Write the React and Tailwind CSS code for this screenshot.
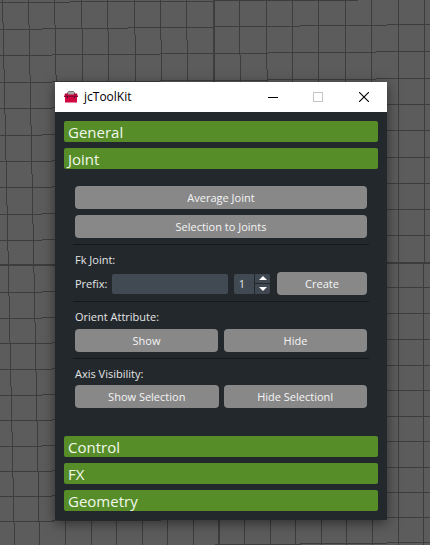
import { useState } from "react";

const verticals = [
  [2, 14], [28, 39], [54, 65], [81, 91], [107, 116], [134, 142], [160, 167], [186, 193],
  [213, 219], [239, 244], [266, 270], [292, 295], [318, 321], [345, 346], [371, 372], [398, 398], [424, 423],
];
const horizontals = [
  [2, -1], [29, 24], [55, 51], [82, 78], [108, 104], [135, 130], [161, 157], [187, 183], [214, 209],
  [240, 235], [265, 262], [292, 287], [318, 313], [343, 339], [369, 365], [395, 390], [420, 416],
  [446, 441], [471, 467], [496, 492], [521, 517], [547, 542],
];

function ViewportGrid() {
  return (
    <svg aria-hidden="true" viewBox="0 0 430 545" preserveAspectRatio="none" shapeRendering="crispEdges" stroke="#3d3d3d" className="absolute inset-0 h-full w-full">
      {verticals.map(([a, b], i) => (
        <line key={a} x1={a + 0.5} y1="0" x2={b + 0.5} y2="545" strokeWidth={i === 8 ? 2 : 1} />
      ))}
      {horizontals.map(([a, b], i) => (
        <line key={a} x1="0" y1={a + 0.5} x2="430" y2={b + 0.5} strokeWidth={i === 10 ? 2 : 1} />
      ))}
    </svg>
  );
}

function ToolboxIcon() {
  return (
    <svg aria-hidden="true" viewBox="0 0 14 12" className="h-3 w-3.5">
      <path d="M3.5 3V1.5L4.5 .5h5l1 1V3" fill="#a9a9a9" stroke="#777" />
      <path d="M1 2.5h12l1 3.5H0z" fill="#b9053a" />
      <path d="M4 2h6v1.5H4z" fill="#aaa" />
      <path d="M1 6h12v5.5H1z" fill="#d10540" />
      <path d="M0 5.5h14" stroke="#8d0832" />
      <path d="M3 5h1v2H3zM10 5h1v2h-1z" fill="#4d1730" />
    </svg>
  );
}

function Section({ title, open, onToggle, children }) {
  return (
    <section>
      <h2>
        <button type="button" aria-expanded={open} onClick={onToggle} className="flex h-[21px] w-full items-center rounded-xs bg-[#568d29] px-1 text-left text-[15px] leading-5 text-[#f2f8ec]">
          {title}
        </button>
      </h2>
      {open && children}
    </section>
  );
}

function ActionButton({ children, className = "w-full" }) {
  return (
    <button type="button" className={`h-[23px] rounded bg-[#888888] text-[11px] leading-4 text-[#f5f5f5] ${className}`}>
      {children}
    </button>
  );
}

function Divider() {
  return <hr className="-mx-0.5 my-1.5 h-px border-0 bg-[#15191c]" />;
}

function JointPanel() {
  const [count, setCount] = useState(1);
  return (
    <div className="px-[11px] pt-[17px] pb-[22px] text-[11px] leading-4 text-[#e4e5e6]">
      <div className="flex flex-col gap-1.5">
        <ActionButton>Average Joint</ActionButton>
        <ActionButton>Selection to Joints</ActionButton>
      </div>
      <Divider />
      <h3 className="h-[21px] pt-px">Fk Joint:</h3>
      <div className="flex items-center">
        <label htmlFor="prefix" className="w-[37px] shrink-0">Prefix:</label>
        <input id="prefix" type="text" className="h-5 min-w-0 flex-1 rounded-xs bg-[#414952] px-1 outline-none" />
        <div className="ml-1.5 flex h-5 w-9 shrink-0 gap-px">
          <input aria-label="Joint count" type="text" inputMode="numeric" value={count} onChange={(e) => setCount(Number(e.target.value) || 0)} className="w-5 rounded-l-xs bg-[#414952] pr-1 text-center outline-none" />
          <div className="flex flex-1 flex-col gap-px">
            <button type="button" aria-label="Increase" onClick={() => setCount(count + 1)} className="flex flex-1 items-center justify-center rounded-tr-xs bg-[#3f4750]">
              <svg viewBox="0 0 8 4" className="h-1 w-2 fill-white"><path d="M0 4 4 0l4 4z" /></svg>
            </button>
            <button type="button" aria-label="Decrease" onClick={() => setCount(count - 1)} className="flex flex-1 items-center justify-center rounded-br-xs bg-[#3f4750]">
              <svg viewBox="0 0 8 4" className="h-1 w-2 fill-white"><path d="M0 0h8L4 4z" /></svg>
            </button>
          </div>
        </div>
        <ActionButton className="ml-[7px] w-[90px] shrink-0">Create</ActionButton>
      </div>
      <Divider />
      <h3 className="h-[21px] pt-px">Orient Attribute:</h3>
      <div className="grid grid-cols-2 gap-1.5">
        <ActionButton>Show</ActionButton>
        <ActionButton>Hide</ActionButton>
      </div>
      <Divider />
      <h3 className="h-5 pt-px">Axis Visibility:</h3>
      <div className="grid grid-cols-2 gap-[5px]">
        <ActionButton>Show Selection</ActionButton>
        <ActionButton>Hide SelectionI</ActionButton>
      </div>
    </div>
  );
}

export default function App() {
  const [open, setOpen] = useState("Joint");
  return (
    <div className="relative isolate min-h-screen bg-[#5c5c5c] pt-[82px] pr-[43px] pb-6 pl-[55px] font-['Open_Sans','Noto_Sans',sans-serif]">
      <ViewportGrid />
      <main className="relative bg-[#23282c] shadow-[0_3px_12px_rgba(0,0,0,0.5)]">
        <header className="flex h-[30px] items-center bg-white pl-[9px] text-black">
          <ToolboxIcon />
          <h1 className="ml-1.5 flex-1 text-xs leading-4">jcToolKit</h1>
          <button type="button" aria-label="Minimize" className="flex h-full w-11 items-center justify-center">
            <svg viewBox="0 0 10 10" className="size-2.5 stroke-black" shapeRendering="crispEdges"><path d="M0 5.5h10" /></svg>
          </button>
          <button type="button" aria-label="Maximize" disabled className="flex h-full w-[46px] items-center justify-center">
            <svg viewBox="0 0 10 10" className="size-2.5 fill-none stroke-[#c4c4c4]" shapeRendering="crispEdges"><path d="M.5 .5h9v9h-9z" /></svg>
          </button>
          <button type="button" aria-label="Close" className="flex h-full w-[46px] items-center justify-center">
            <svg viewBox="0 0 10 10" className="size-2.5 stroke-black"><path d="M0 0l10 10M10 0L0 10" strokeWidth="1.1" /></svg>
          </button>
        </header>
        <div className="flex flex-col gap-1.5 p-[9px]">
          {["General", "Joint", "Control", "FX", "Geometry"].map((title) => (
            <Section key={title} title={title} open={open === title} onToggle={() => setOpen(open === title ? "" : title)}>
              {title === "Joint" && <JointPanel />}
            </Section>
          ))}
        </div>
      </main>
    </div>
  );
}
